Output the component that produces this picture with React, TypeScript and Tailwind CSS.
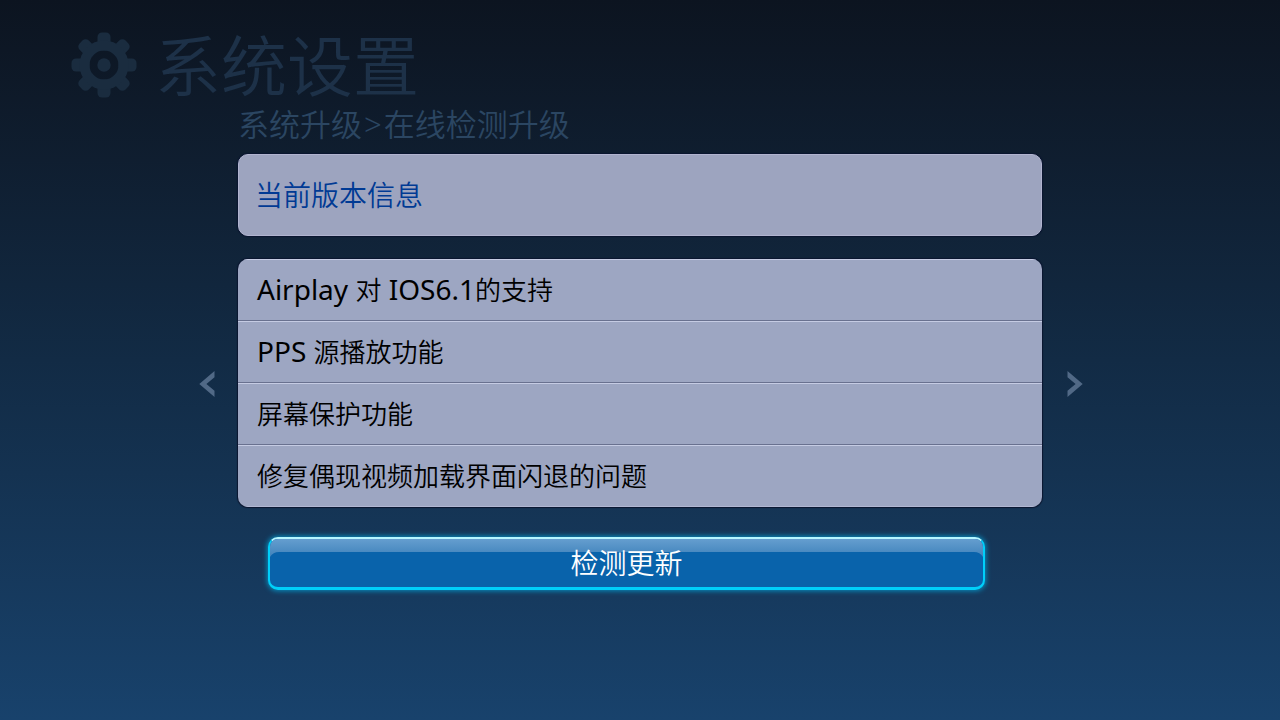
import type { ReactNode } from 'react';

const features = [
  { id: 'airplay', parts: [{ latin: true, text: 'Airplay ' }, { latin: false, text: '对' }, { latin: true, text: ' IOS6.1' }, { latin: false, text: '的支持' }] },
  { id: 'pps', parts: [{ latin: true, text: 'PPS ' }, { latin: false, text: '源播放功能' }] },
  { id: 'screensaver', parts: [{ latin: false, text: '屏幕保护功能' }] },
  { id: 'crash', parts: [{ latin: false, text: '修复偶现视频加载界面闪退的问题' }] },
];

const toothAngles = [0, 45, 90, 135, 180, 225, 270, 315];

function GearIcon() {
  return (
    <svg viewBox="0 0 66 66" className="size-[66px]" aria-hidden="true">
      <g fill="#1a2c3f">
        {toothAngles.map((angle) => (
          <rect key={angle} x="26.5" y="0.5" width="13" height="18" rx="4.5" transform={`rotate(${angle} 33 33)`} />
        ))}
        <path fillRule="evenodd" d="M33 8.5a24.5 24.5 0 1 0 0 49a24.5 24.5 0 1 0 0-49zM33 18.5a14.5 14.5 0 1 1 0 29a14.5 14.5 0 1 1 0-29z" />
        <circle cx="33" cy="33" r="6.7" />
      </g>
    </svg>
  );
}

function ArrowButton({ label, children }: { label: string; children: ReactNode }) {
  return (
    <button type="button" aria-label={label} className="flex items-center justify-center pt-0.5 pl-0.5 text-[#516986]">
      {children}
    </button>
  );
}

export default function App() {
  return (
    <div className="min-h-screen bg-linear-to-b from-[#0c1420] via-[#122b45] to-[#18426c] pb-10 font-['Noto_Sans','Noto_Sans_CJK_SC',sans-serif]">
      <header className="flex items-center gap-[18px] pt-8 pl-[71px] text-[#1d3148]">
        <GearIcon />
        <h1 className="text-[66px] leading-[66px] font-[350]">系统设置</h1>
      </header>

      <main className="grid grid-cols-[64px_minmax(0,804px)_64px] justify-center">
        <nav aria-label="位置" className="col-start-2 mt-2 flex items-center gap-0.5 text-[31px] leading-9 font-[350] text-[#2b4662]">
          <a href="#upgrade">系统升级</a>
          <span>&gt;</span>
          <a href="#online">在线检测升级</a>
        </nav>

        <section className="col-start-2 mt-3 rounded-[10px] border border-[#b1b4cf] bg-[#9da4bf] px-4 py-5 shadow-[0_0_1px_1px_#0a1630]">
          <h2 className="text-[28px] leading-10 font-[350] text-[#003a94]">当前版本信息</h2>
        </section>

        <div className="col-span-3 mt-[23px] grid grid-cols-subgrid">
          <ArrowButton label="上一页">
            <svg viewBox="0 0 16 26" className="h-[26px] w-4" fill="currentColor" aria-hidden="true">
              <path d="M15.5 0v6.2L7.4 13l8.1 6.8V26L0.3 13z" />
            </svg>
          </ArrowButton>
          <ul className="overflow-hidden rounded-[10px] bg-[#9da6c2] shadow-[0_0_1px_1px_#0a1630]">
            {features.map((feature) => (
              <li
                key={feature.id}
                className="h-[62px] border-t border-b border-t-[#c5cbe3] border-b-[#69718f] px-[19px] text-[26px] leading-[60px] font-[350] whitespace-pre text-black last:border-b-[#b1b7d2]"
              >
                {feature.parts.map((part) => (
                  <span key={part.text} className={part.latin ? 'text-[28px] leading-none font-normal' : ''}>
                    {part.text}
                  </span>
                ))}
              </li>
            ))}
          </ul>
          <ArrowButton label="下一页">
            <svg viewBox="0 0 16 26" className="h-[26px] w-4" fill="currentColor" aria-hidden="true">
              <path d="M0.5 0v6.2L8.6 13l-8.1 6.8V26L15.7 13z" />
            </svg>
          </ArrowButton>
        </div>

        <button
          type="button"
          className="relative col-start-2 mt-[30px] mr-[57px] ml-[30px] overflow-hidden rounded-[10px] border-2 border-b-3 border-[#00cffa] border-t-[#b5f5ff] bg-[#0963ab] text-[28px] leading-[48px] font-[350] text-white shadow-[0_0_5px_1px_#078fc0]"
        >
          <svg className="absolute inset-x-0 top-0 h-5 w-full" viewBox="0 0 713 20" preserveAspectRatio="none" aria-hidden="true">
            <defs>
              <linearGradient id="gloss" x1="0" y1="0" x2="0" y2="1">
                <stop offset="0" stopColor="#659ecf" />
                <stop offset="1" stopColor="#3f82bb" />
              </linearGradient>
            </defs>
            <path d="M0 0h713v18q-3-5-9-5H9q-6 0-9 5z" fill="url(#gloss)" />
          </svg>
          <span className="relative">检测更新</span>
        </button>
      </main>
    </div>
  );
}
